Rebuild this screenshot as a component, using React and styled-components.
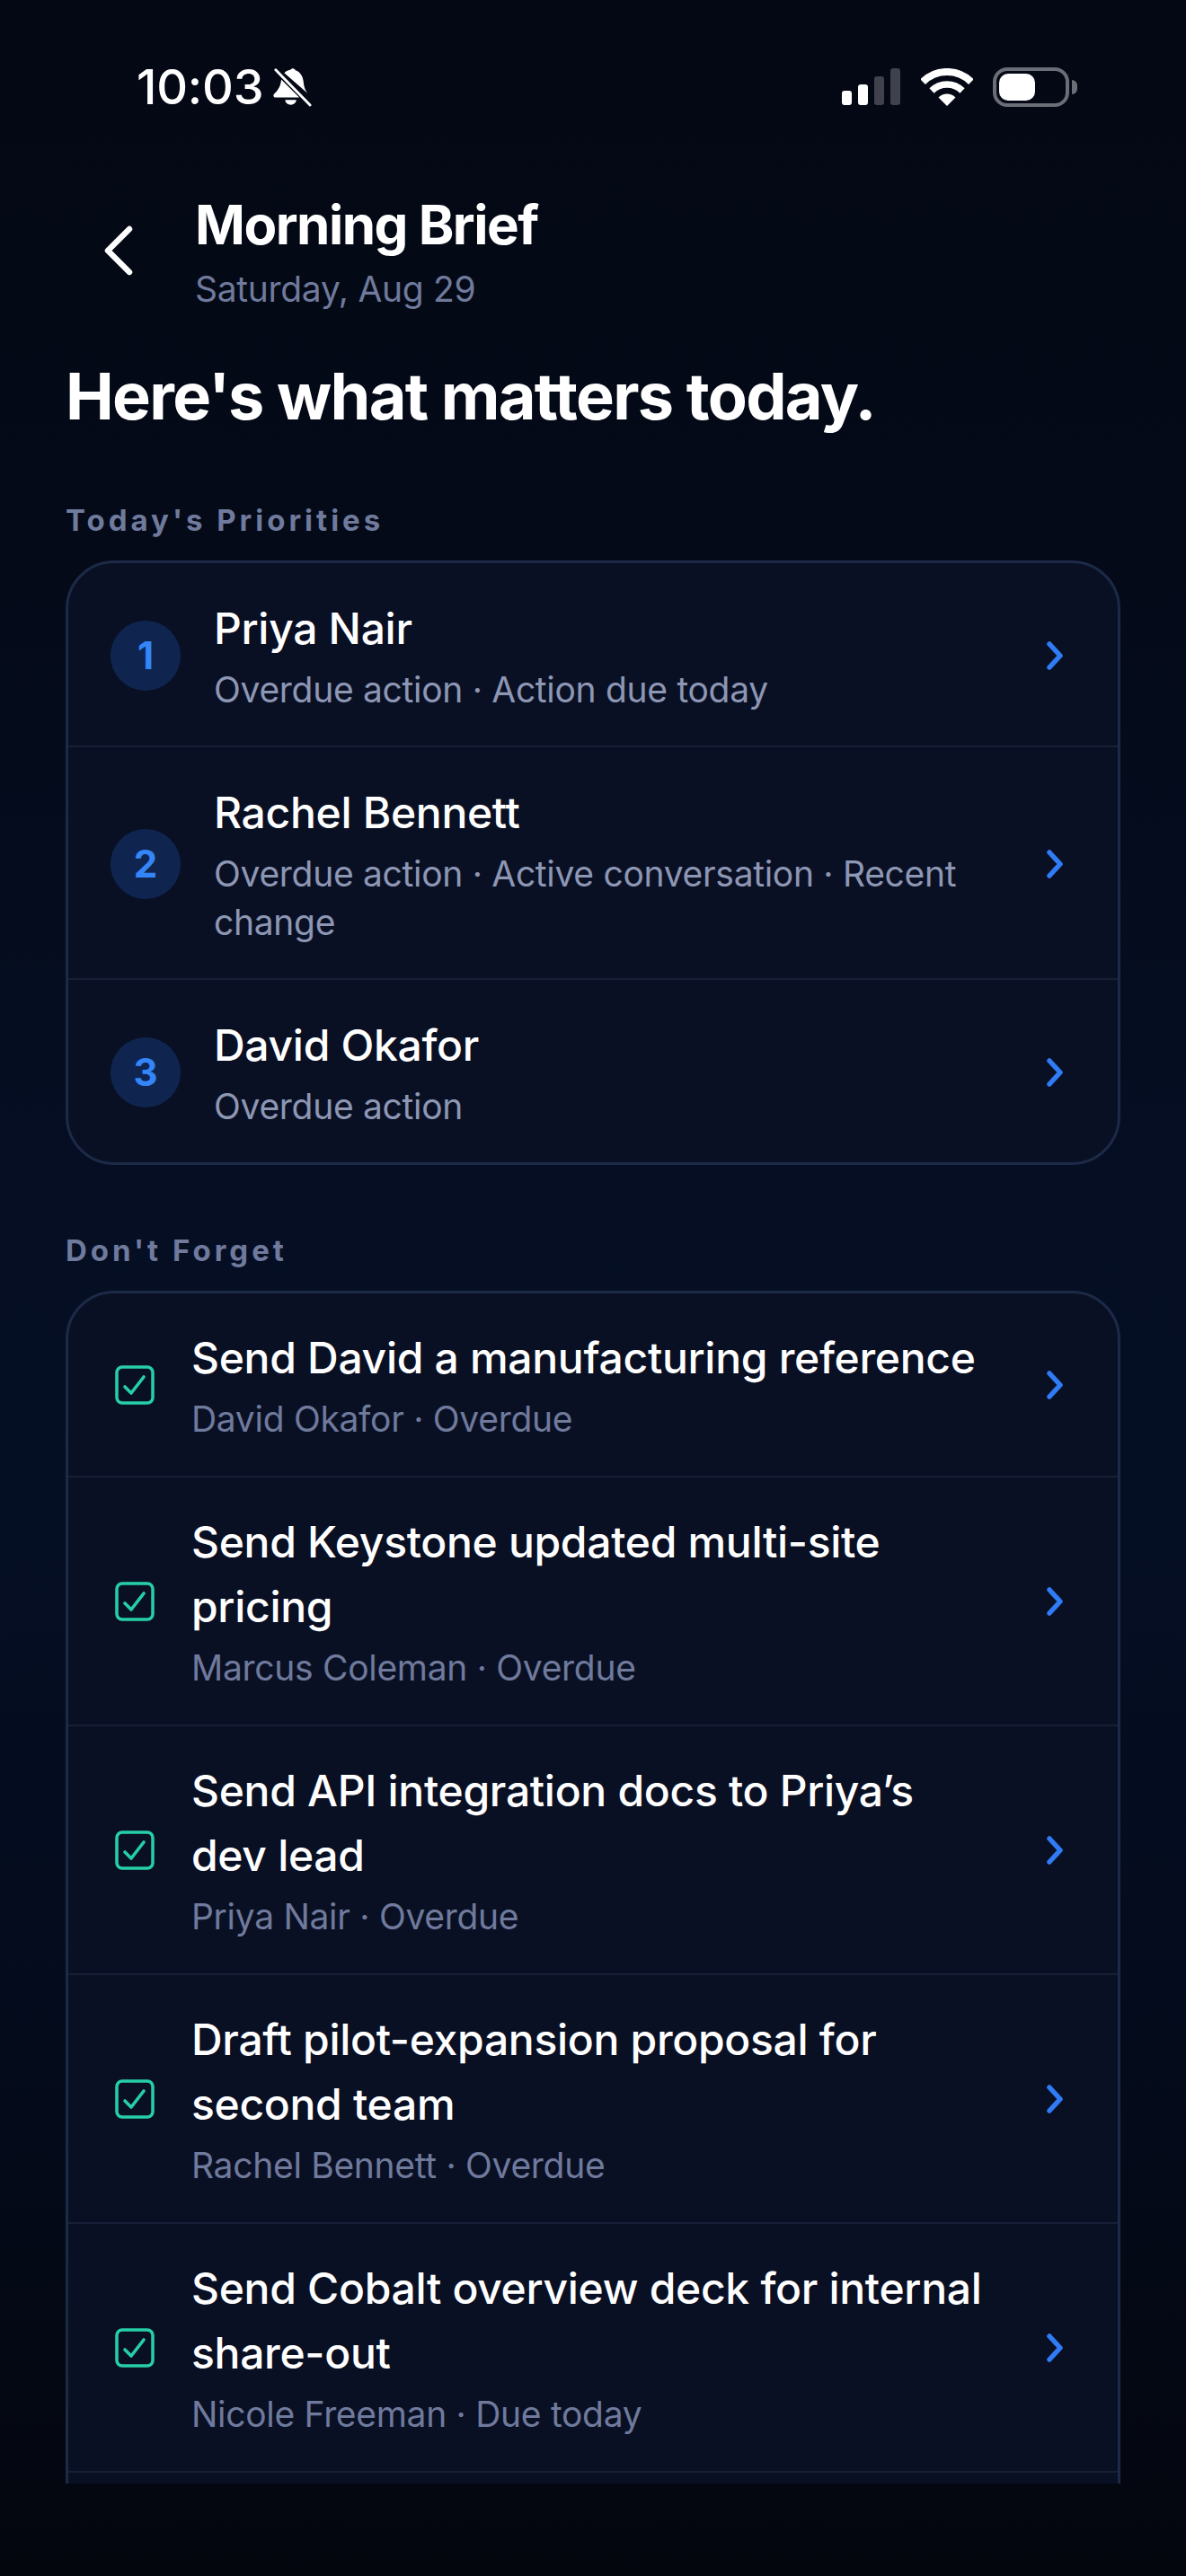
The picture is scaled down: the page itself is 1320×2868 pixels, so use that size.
import React from 'react';
import styled, { createGlobalStyle } from 'styled-components';

const GlobalStyle = createGlobalStyle`
  * { box-sizing: border-box; }
  html, body { margin: 0; padding: 0; background: #04070f; }
  body { font-family: Inter, "Liberation Sans", sans-serif; }
`;

const Page = styled.div`
  width: 1320px;
  height: 2868px;
  padding-bottom: 103px;
  display: flex;
  flex-direction: column;
  overflow: hidden;
  color: #fff;
  background: linear-gradient(180deg, #040814 0, #040a18 22%, #050e23 46%, #050f24 56%, #040c1e 74%, #040916 88%, #04060e 100%);
`;

const StatusBar = styled.div`
  height: 214px;
  flex: none;
  padding: 70px 122px 0 152px;
  display: flex;
  align-items: flex-start;
  justify-content: space-between;
`;

const TimeGroup = styled.div`
  display: flex;
  align-items: center;
  gap: 10px;
  height: 54px;
`;

const Time = styled.span`
  font-size: 54px;
  font-weight: 500;
  line-height: 54px;
  letter-spacing: -0.2px;
`;

const StatusIcons = styled.div`
  display: flex;
  align-items: center;
  gap: 22px;
  height: 54px;
`;

const Battery = styled.div`
  position: relative;
  width: 85px;
  height: 44px;
  border: 4px solid #6b6d77;
  border-radius: 16px;
  padding: 3px;
  margin-right: 8px;

  &::after {
    content: '';
    position: absolute;
    right: -13px;
    top: 10px;
    width: 6px;
    height: 16px;
    background: #6b6d77;
    border-radius: 0 8px 8px 0;
  }
`;

const BatteryFill = styled.div`
  width: 40px;
  height: 100%;
  background: #fff;
  border-radius: 10px;
`;

const Header = styled.header`
  flex: none;
  display: flex;
  align-items: flex-start;
  padding-left: 115px;
`;

const BackButton = styled.div`
  width: 102px;
  padding-top: 37px;
  display: flex;
`;

const HeaderText = styled.div`
  display: flex;
  flex-direction: column;
`;

const Title = styled.h1`
  margin: 0;
  font-size: 60px;
  line-height: 72px;
  font-weight: 700;
  letter-spacing: -1.5px;
`;

const DateLine = styled.div`
  margin-top: 12px;
  font-size: 39px;
  line-height: 48px;
  letter-spacing: -0.3px;
  color: #6f7a9c;
`;

const Scroll = styled.main`
  flex: 1;
  min-height: 0;
  overflow: hidden;
  padding: 0 73px;
`;

const Heading = styled.h2`
  margin: 53px 0 0;
  font-size: 72px;
  line-height: 84px;
  font-weight: 700;
  letter-spacing: -1.7px;
`;

const SectionLabel = styled.div`
  margin-top: ${(p) => p.$gap}px;
  margin-bottom: 25px;
  font-size: 33px;
  line-height: 40px;
  font-weight: 700;
  letter-spacing: 4px;
  color: #6f7a9c;
`;

const Card = styled.section`
  border: 3px solid #1c2a47;
  border-radius: 54px;
  background: #0a1024;
  overflow: hidden;
`;

const Row = styled.div`
  display: flex;
  align-items: center;
  padding: ${(p) => p.$top}px 0 ${(p) => 72 - p.$top}px ${(p) => p.$left}px;
  border-top: ${(p) => (p.$first ? 'none' : '2px solid #161f36')};
`;

const RowStub = styled.div`
  height: 200px;
  border-top: 2px solid #161f36;
`;

const Badge = styled.div`
  width: 78px;
  height: 78px;
  flex: none;
  border-radius: 50%;
  background: #0f2550;
  color: #3385f8;
  font-size: 42px;
  font-weight: 700;
  display: flex;
  align-items: center;
  justify-content: center;
`;

const RowBody = styled.div`
  flex: 1;
  min-width: 0;
  margin-left: ${(p) => p.$gap}px;
`;

const RowTitle = styled.div`
  font-size: 48px;
  line-height: 72px;
  font-weight: 550;
  letter-spacing: -0.3px;
  color: #fff;
`;

const RowSub = styled.div`
  margin-top: 5px;
  font-size: 39px;
  line-height: 54px;
  letter-spacing: -0.3px;
  color: ${(p) => p.$color};
`;

const RowEnd = styled.div`
  flex: none;
  width: 140px;
  display: flex;
  padding-left: 61px;
`;

const Chevron = () => (
  <svg width="18" height="32" viewBox="0 0 18 32" fill="none">
    <path d="M3 3 L15 16 L3 29" stroke="#2f7cf6" strokeWidth="5.5" strokeLinecap="round" strokeLinejoin="round" />
  </svg>
);

const BackChevron = () => (
  <svg width="34" height="56" viewBox="0 0 34 56" fill="none">
    <path d="M29 4 L5 28 L29 52" stroke="#fff" strokeWidth="6.5" strokeLinecap="round" strokeLinejoin="round" />
  </svg>
);

const CheckIcon = () => (
  <svg width="44" height="44" viewBox="0 0 44 44" fill="none" style={{ flex: 'none' }}>
    <rect x="2" y="2" width="40" height="40" rx="6" stroke="#26cfa8" strokeWidth="3.500" />
    <path d="M11 24 L18 31 L32 13" stroke="#26cfa8" strokeWidth="3.600" strokeLinecap="round" strokeLinejoin="round" />
  </svg>
);

const BellOff = () => (
  <svg width="44" height="46" viewBox="0 0 46 46" fill="none">
    <path d="M21 3 C22.500 .5 26 .5 27 3.500 C33 5.500 36 11 36.500 18 C37 23 38 26 41 30 L14 6.500 C15.500 5 18 3.500 21 3 Z" fill="#fff" />
    <path d="M10.500 14 L31.500 35 L4 35 C1.500 35 .5 32.500 2.500 30.500 C7 26.500 10 21 10.500 14 Z" fill="#fff" />
    <path d="M15 38 L28 38 C27.500 45.500 15.500 45.500 15 38 Z" fill="#fff" />
    <path d="M4 3 L44 44" stroke="#fff" strokeWidth="3" strokeLinecap="round" />
  </svg>
);

const Signal = () => (
  <svg width="66" height="42" viewBox="0 0 66 42">
    <rect x="0" y="25" width="11" height="16" rx="3" fill="#fff" />
    <rect x="18" y="18" width="11" height="23" rx="3" fill="#fff" />
    <rect x="36" y="9" width="11" height="32" rx="3" fill="#3f424d" />
    <rect x="54" y="0" width="11" height="41" rx="3" fill="#3f424d" />
  </svg>
);

const Wifi = () => (
  <svg width="58" height="42" viewBox="0 0 58 42" fill="none">
    <path d="M2.100 15.100 A38 38 0 0 1 55.900 15.100" stroke="#fff" strokeWidth="8" />
    <path d="M12 25 A24 24 0 0 1 46 25" stroke="#fff" strokeWidth="7.500" />
    <path d="M29 42 L19.500 32.500 A13.500 13.500 0 0 1 38.500 32.500 Z" fill="#fff" />
  </svg>
);

const priorities = [
  { name: 'Priya Nair', note: 'Overdue action · Action due today' },
  { name: 'Rachel Bennett', note: 'Overdue action · Active conversation · Recent change' },
  { name: 'David Okafor', note: 'Overdue action' },
];

const reminders = [
  { task: 'Send David a manufacturing reference', note: 'David Okafor · Overdue' },
  { task: 'Send Keystone updated multi-site pricing', note: 'Marcus Coleman · Overdue' },
  { task: 'Send API integration docs to Priya’s dev lead', note: 'Priya Nair · Overdue' },
  { task: 'Draft pilot-expansion proposal for second team', note: 'Rachel Bennett · Overdue' },
  { task: 'Send Cobalt overview deck for internal share-out', note: 'Nicole Freeman · Due today' },
];

export default function App() {
  return (
    <Page>
      <GlobalStyle />
      <StatusBar>
        <TimeGroup>
          <Time>10:03</Time>
          <BellOff />
        </TimeGroup>
        <StatusIcons>
          <Signal />
          <Wifi />
          <Battery>
            <BatteryFill />
          </Battery>
        </StatusIcons>
      </StatusBar>
      <Header>
        <BackButton>
          <BackChevron />
        </BackButton>
        <HeaderText>
          <Title>Morning Brief</Title>
          <DateLine>Saturday, Aug 29</DateLine>
        </HeaderText>
      </Header>
      <Scroll>
        <Heading>Here's what matters today.</Heading>
        <SectionLabel $gap={76}>Today's Priorities</SectionLabel>
        <Card>
          {priorities.map((item, i) => (
            <Row key={item.name} $first={i === 0} $left={47} $top={37}>
              <Badge>{i + 1}</Badge>
              <RowBody $gap={37}>
                <RowTitle>{item.name}</RowTitle>
                <RowSub $color="#8d97b4">{item.note}</RowSub>
              </RowBody>
              <RowEnd>
                <Chevron />
              </RowEnd>
            </Row>
          ))}
        </Card>
        <SectionLabel $gap={75}>Don't Forget</SectionLabel>
        <Card>
          {reminders.map((item, i) => (
            <Row key={item.task} $first={i === 0} $left={52} $top={36}>
              <CheckIcon />
              <RowBody $gap={41}>
                <RowTitle>{item.task}</RowTitle>
                <RowSub $color="#6f7a9c">{item.note}</RowSub>
              </RowBody>
              <RowEnd>
                <Chevron />
              </RowEnd>
            </Row>
          ))}
          <RowStub />
        </Card>
      </Scroll>
    </Page>
  );
}
